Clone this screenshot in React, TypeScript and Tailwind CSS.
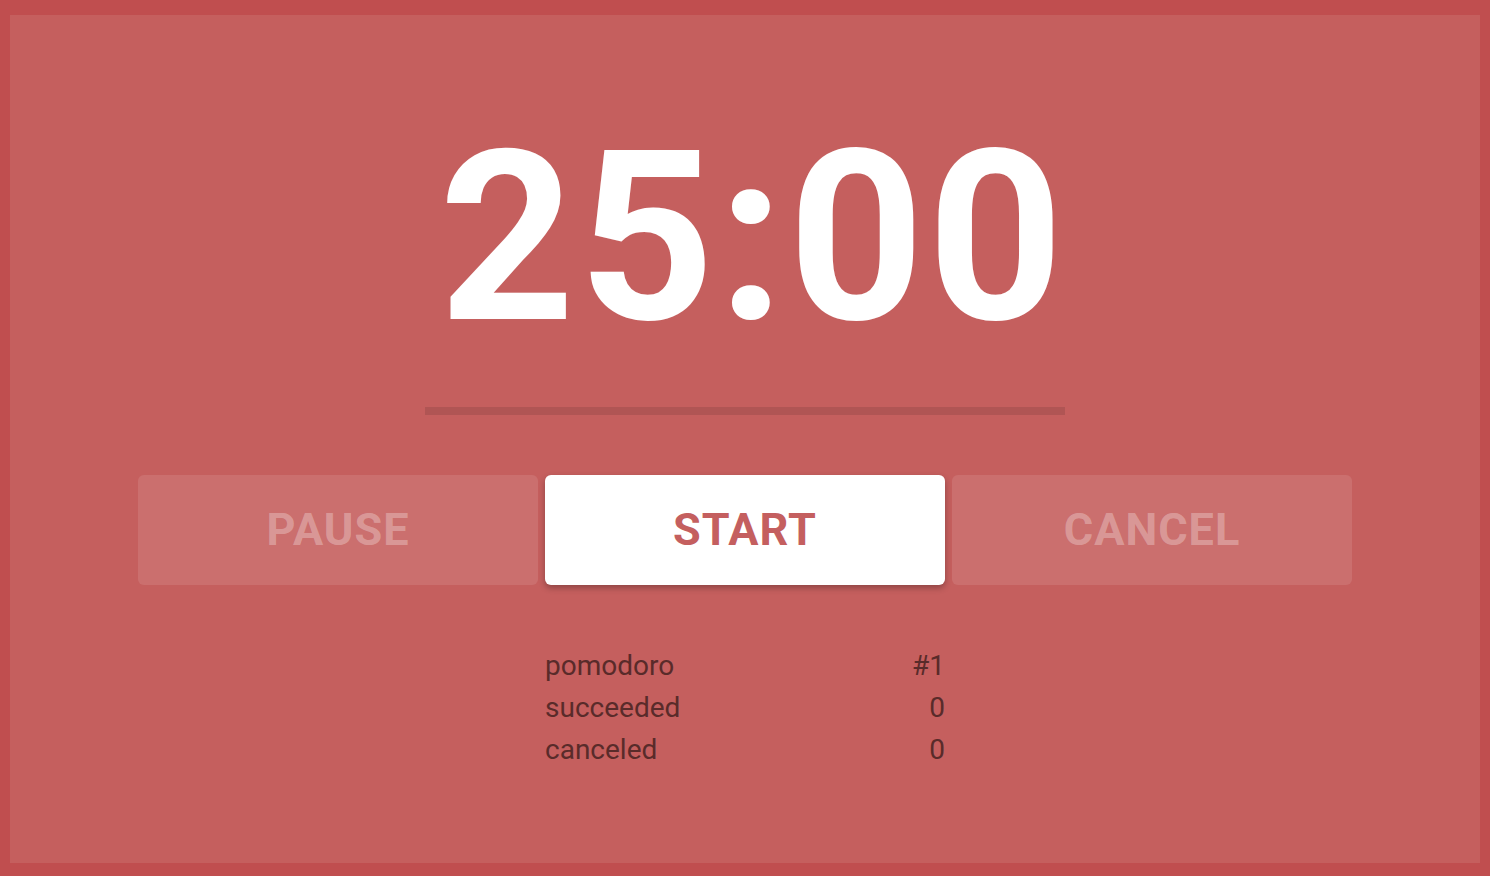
// Pomodoro timer screen

const STATS = [
  { label: "pomodoro", value: "#1" },
  { label: "succeeded", value: "0" },
  { label: "canceled", value: "0" },
];

function TimerButton({ label, active }: { label: string; active?: boolean }) {
  return (
    <button
      className={
        active
          ? "w-[400px] h-[110px] rounded-[6px] bg-white text-[#c45f5f] shadow-[0_3px_6px_rgba(0,0,0,0.28)] text-[45px] font-bold tracking-[1px]"
          : "w-[400px] h-[110px] rounded-[6px] bg-white/10 text-white/30 text-[45px] font-bold tracking-[1px]"
      }
    >
      {label}
    </button>
  );
}

export default function App() {
  return (
    <div
      className="w-[1490px] h-[876px] bg-[#c04e4f] pt-[15px] px-[10px] pb-[13px]"
      style={{ fontFamily: "Roboto, 'Liberation Sans', sans-serif" }}
    >
      <div className="h-full bg-[#c55f5e] flex flex-col items-center">
        {/* Timer */}
        <div className="mt-[105px] ml-[16px] text-[237px] leading-none font-bold text-white tracking-[3.5px]">
          25:00
        </div>

        {/* Progress */}
        <div className="mt-[50px] w-[640px] h-[8px] bg-black/10" />

        {/* Actions */}
        <div className="mt-[60px] flex gap-[7px]">
          <TimerButton label="PAUSE" />
          <TimerButton label="START" active />
          <TimerButton label="CANCEL" />
        </div>

        {/* Stats */}
        <div className="mt-[60px] w-[400px] flex flex-col text-[28px] leading-[42px] text-[#592b2a]">
          {STATS.map((s) => (
            <div key={s.label} className="flex justify-between">
              <span>{s.label}</span>
              <span>{s.value}</span>
            </div>
          ))}
        </div>
      </div>
    </div>
  );
}
